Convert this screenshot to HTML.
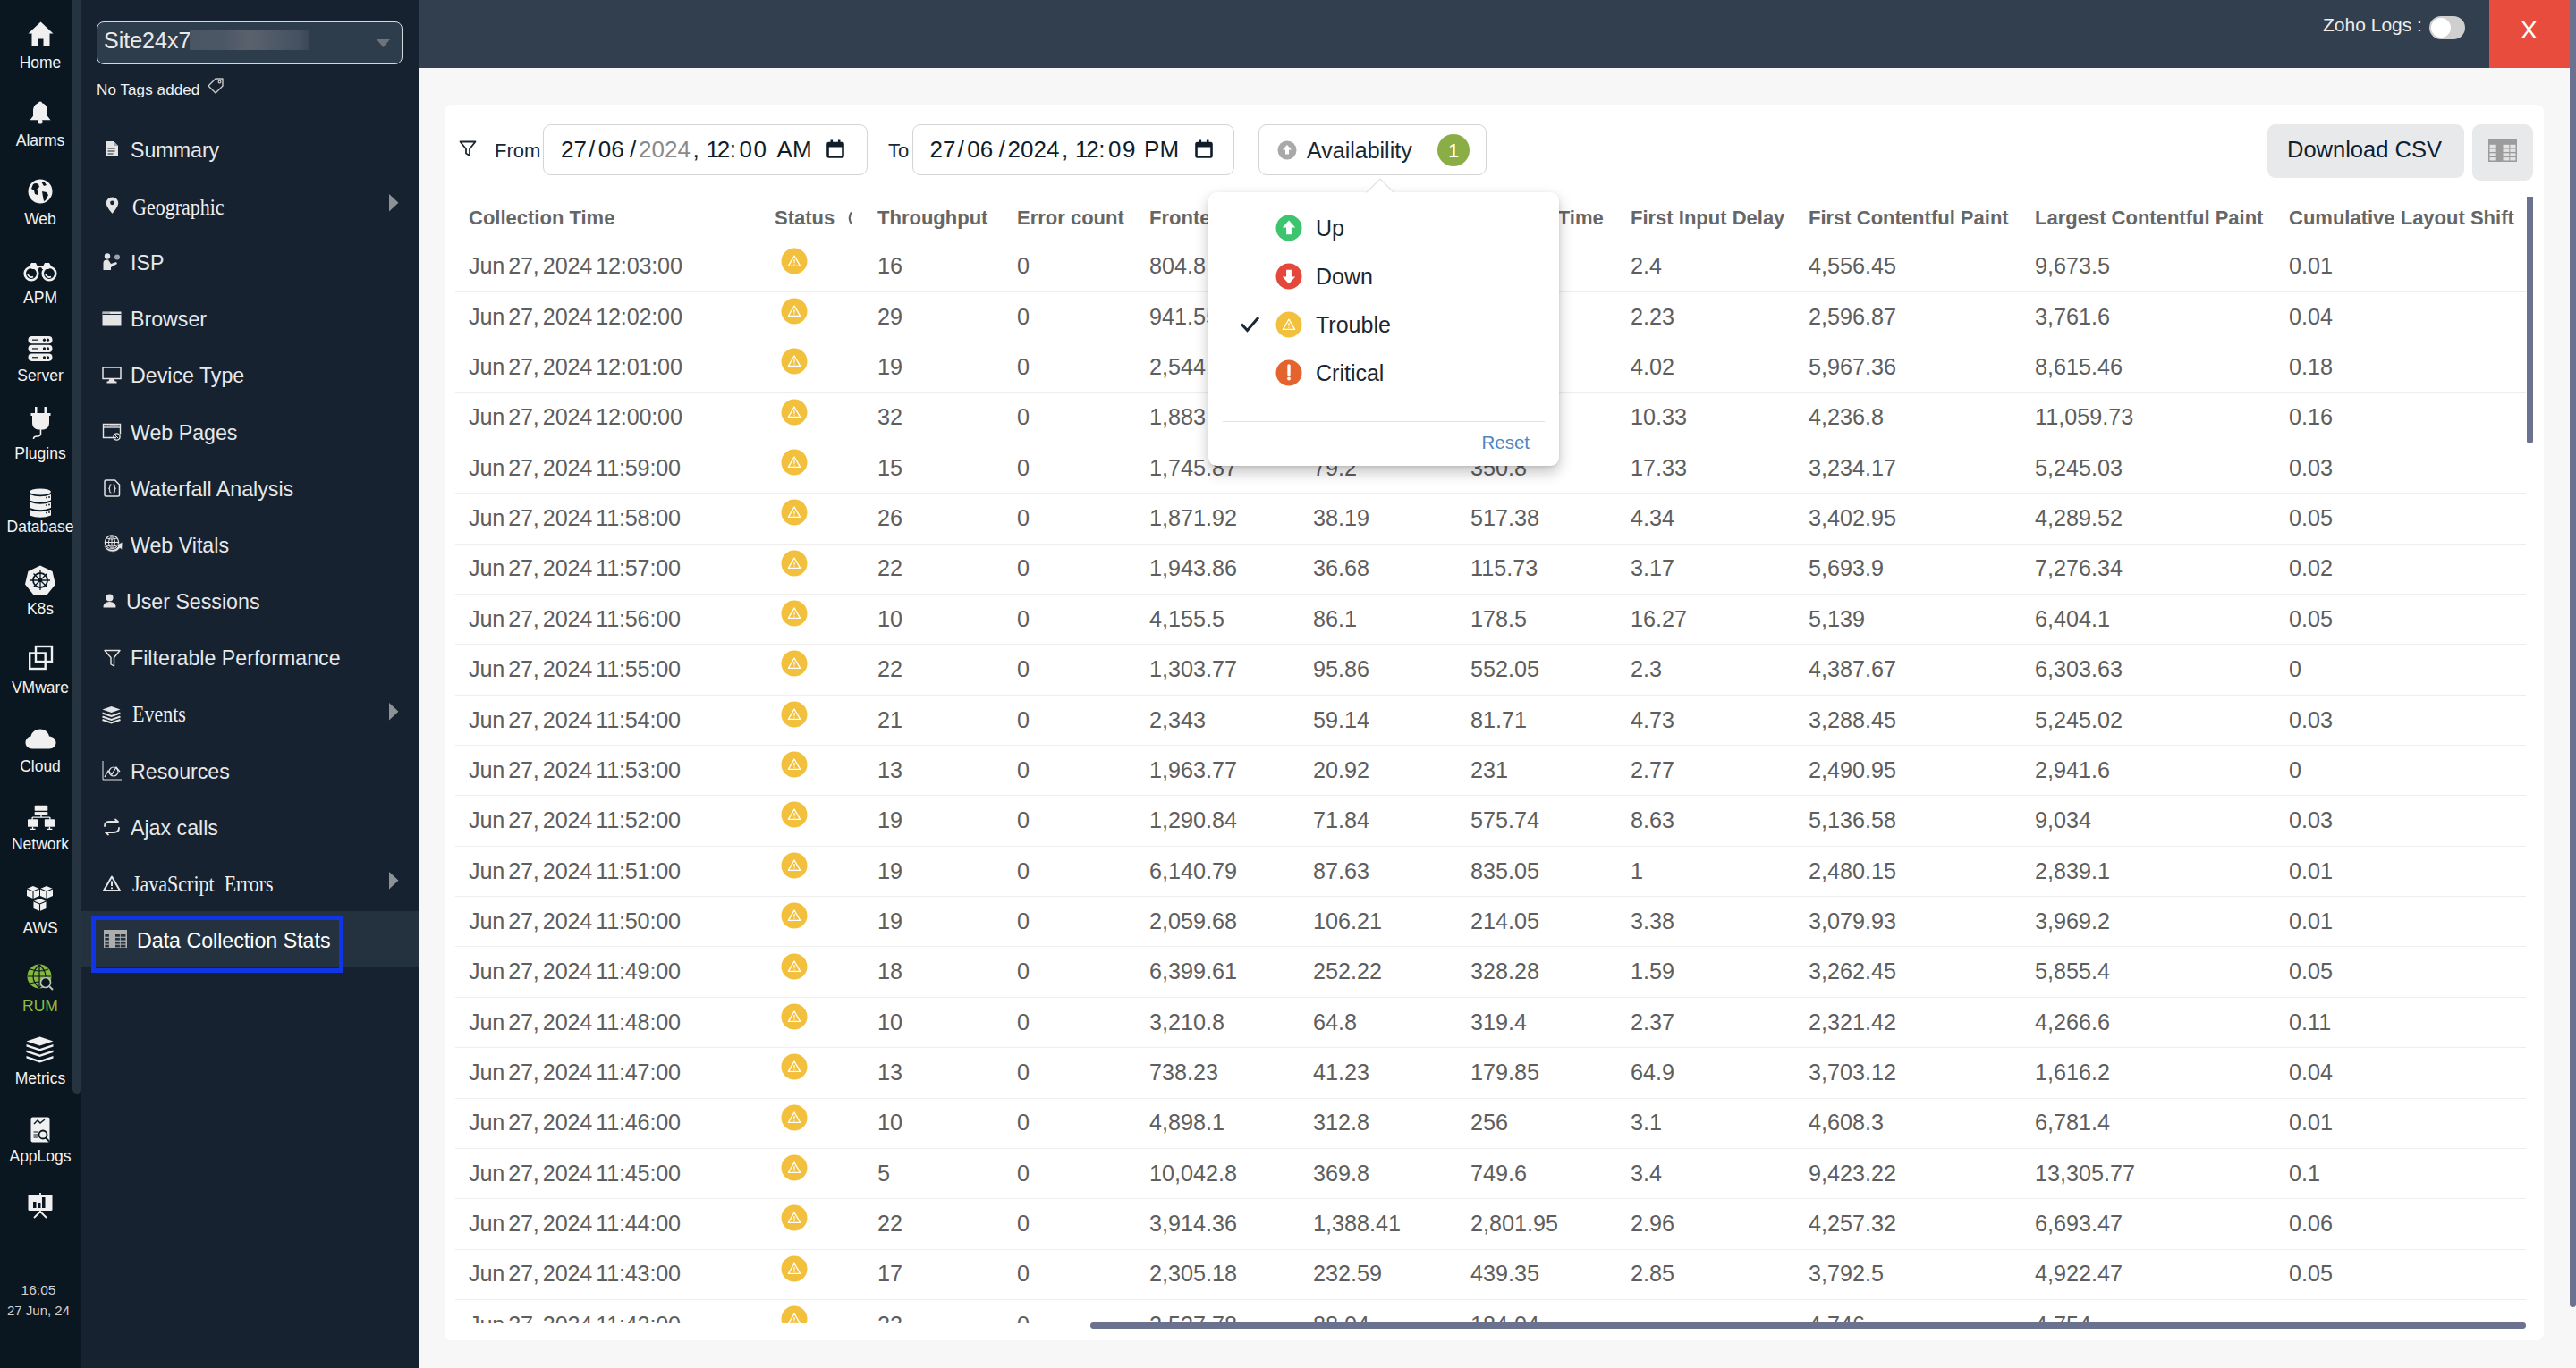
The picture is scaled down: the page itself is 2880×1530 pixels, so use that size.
<!DOCTYPE html>
<html><head><meta charset="utf-8"><title>Data Collection Stats</title>
<style>
html,body{margin:0;padding:0;}
body{width:2880px;height:1530px;position:relative;overflow:hidden;background:#f7f7f7;font-family:"Liberation Sans", sans-serif;}
.t{position:absolute;white-space:nowrap;line-height:1;}
.f1{font-family:"Liberation Sans", sans-serif;}
.f2{font-family:"Liberation Serif", serif;}
.b{position:absolute;}
svg.b{overflow:visible;}
</style></head><body>

<div class="b" style="left:0.00px;top:0.00px;width:81.00px;height:1530.00px;background:#0a1721"></div>
<div class="b" style="left:81.00px;top:0.00px;width:9.00px;height:1530.00px;background:#0a1721"></div>
<div class="b" style="left:81.00px;top:0.00px;width:9.00px;height:1223.00px;background:#263442;border-radius:0 0 4px 5px"></div>
<div class="b" style="left:90.00px;top:0.00px;width:378.00px;height:1530.00px;background:#16222f"></div>
<div class="b" style="left:468.00px;top:0.00px;width:2405.00px;height:76.00px;background:#323f4e"></div>
<div class="b" style="left:2783.00px;top:0.00px;width:90.50px;height:76.00px;background:#e84c3d"></div>
<div class="b" style="left:2873.00px;top:0.00px;width:7.00px;height:1530.00px;background:#f7f7f7"></div>
<div class="b" style="left:2873.30px;top:0.00px;width:6.70px;height:1462.00px;background:#6b7290;border-radius:0 0 4px 4px"></div>
<div class="t f1" style="left:2597.00px;top:17.02px;font-size:21px;color:#ececec;">Zoho Logs :</div>
<div class="b" style="left:2716.00px;top:18.00px;width:40.00px;height:26.00px;background:#cfcfcf;border-radius:13px"></div>
<div class="b" style="left:2718.00px;top:20.00px;width:22.00px;height:22.00px;background:#fff;border-radius:50%"></div>
<div class="t f1" style="left:2818.00px;top:20.30px;font-size:28px;color:#fff;">X</div>
<div class="b" style="left:497.00px;top:116.50px;width:2347.00px;height:1382.70px;background:#fff;border-radius:8px"></div>
<svg class="b" style="left:513.00px;top:157.00px;" width="20" height="19" viewBox="0 0 20 19"><path d="M1.5 1.5h17l-6.5 8v7.5l-4 -2.5v-5z" fill="none" stroke="#1b2733" stroke-width="1.8" stroke-linejoin="round"/></svg>
<div class="t f1" style="left:553.00px;top:157.88px;font-size:22px;color:#1b2733;">From</div>
<div class="b" style="left:607.00px;top:139.00px;width:363.00px;height:57.00px;border:1.5px solid #d4d4d4;border-radius:9px;box-sizing:border-box"></div>
<div class="t f1" style="left:627.00px;top:153.99px;font-size:26px;color:#0f1d2b;">27</div>
<div class="t f1" style="left:658.00px;top:153.99px;font-size:26px;color:#0f1d2b;">/</div>
<div class="t f1" style="left:668.80px;top:153.99px;font-size:26px;color:#0f1d2b;">06</div>
<div class="t f1" style="left:704.00px;top:153.99px;font-size:26px;color:#0f1d2b;">/</div>
<div class="t f1" style="left:714.00px;top:153.99px;font-size:26px;color:#8a8a8a;">2024</div>
<div class="t f1" style="left:774.40px;top:153.99px;font-size:26px;color:#0f1d2b;">,</div>
<div class="t f1" style="left:789.40px;top:153.99px;font-size:26px;color:#0f1d2b;letter-spacing:-2px;">12</div>
<div class="t f1" style="left:815.80px;top:153.99px;font-size:26px;color:#0f1d2b;">:</div>
<div class="t f1" style="left:826.50px;top:153.99px;font-size:26px;color:#0f1d2b;letter-spacing:1.5px;">00</div>
<div class="t f1" style="left:868.60px;top:153.99px;font-size:26px;color:#0f1d2b;">AM</div>
<svg class="b" style="left:924.00px;top:156.00px;" width="20" height="21" viewBox="0 0 20 21"><rect x="1.5" y="4" width="17" height="15.5" rx="1" fill="none" stroke="#0f1d2b" stroke-width="2.6"/><rect x="1.5" y="4" width="17" height="4.5" fill="#0f1d2b"/><rect x="4.5" y="0.5" width="2.6" height="4" fill="#0f1d2b"/><rect x="12.9" y="0.5" width="2.6" height="4" fill="#0f1d2b"/></svg>
<div class="t f1" style="left:993.00px;top:157.88px;font-size:22px;color:#1b2733;">To</div>
<div class="b" style="left:1020.00px;top:139.00px;width:360.00px;height:57.00px;border:1.5px solid #d4d4d4;border-radius:9px;box-sizing:border-box"></div>
<div class="t f1" style="left:1039.50px;top:153.99px;font-size:26px;color:#0f1d2b;">27</div>
<div class="t f1" style="left:1070.50px;top:153.99px;font-size:26px;color:#0f1d2b;">/</div>
<div class="t f1" style="left:1081.30px;top:153.99px;font-size:26px;color:#0f1d2b;">06</div>
<div class="t f1" style="left:1116.50px;top:153.99px;font-size:26px;color:#0f1d2b;">/</div>
<div class="t f1" style="left:1126.50px;top:153.99px;font-size:26px;color:#0f1d2b;">2024</div>
<div class="t f1" style="left:1186.90px;top:153.99px;font-size:26px;color:#0f1d2b;">,</div>
<div class="t f1" style="left:1201.90px;top:153.99px;font-size:26px;color:#0f1d2b;letter-spacing:-2px;">12</div>
<div class="t f1" style="left:1228.30px;top:153.99px;font-size:26px;color:#0f1d2b;">:</div>
<div class="t f1" style="left:1239.00px;top:153.99px;font-size:26px;color:#0f1d2b;letter-spacing:1.5px;">09</div>
<div class="t f1" style="left:1279.10px;top:153.99px;font-size:26px;color:#0f1d2b;">PM</div>
<svg class="b" style="left:1336.00px;top:156.00px;" width="20" height="21" viewBox="0 0 20 21"><rect x="1.5" y="4" width="17" height="15.5" rx="1" fill="none" stroke="#0f1d2b" stroke-width="2.6"/><rect x="1.5" y="4" width="17" height="4.5" fill="#0f1d2b"/><rect x="4.5" y="0.5" width="2.6" height="4" fill="#0f1d2b"/><rect x="12.9" y="0.5" width="2.6" height="4" fill="#0f1d2b"/></svg>
<div class="b" style="left:1407.00px;top:139.00px;width:255.00px;height:57.00px;border:1.5px solid #d4d4d4;border-radius:9px;box-sizing:border-box;background:#fff"></div>
<svg class="b" style="left:1428.00px;top:157.00px;" width="22" height="22" viewBox="0 0 22 22"><circle cx="11" cy="11" r="10.5" fill="#a9a9a9"/><path d="M11 5l-5 5.5h3v5h4v-5h3z" fill="#fff"/></svg>
<div class="t f1" style="left:1461.00px;top:156.34px;font-size:25px;color:#1b2733;">Availability</div>
<div class="b" style="left:1607.00px;top:150.00px;width:36.00px;height:36.00px;background:#8bad45;border-radius:50%"></div>
<div class="t f1" style="left:1619.00px;top:158.38px;font-size:22px;color:#fff;">1</div>
<div class="b" style="left:2535.00px;top:139.00px;width:220.00px;height:60.00px;background:#e8e9ea;border-radius:9px"></div>
<div class="t f1" style="left:2557.00px;top:155.41px;font-size:25.5px;color:#10202e;">Download CSV</div>
<div class="b" style="left:2764.00px;top:139.00px;width:68.00px;height:63.00px;background:#e8e9ea;border-radius:9px"></div>
<svg class="b" style="left:2782.00px;top:156.00px;" width="32" height="25" viewBox="0 0 32 25"><rect x="0" y="0" width="32" height="25" fill="#9c9c9c"/><rect x="1.5" y="5.80" width="6.2" height="3.4" fill="#e2e3e4"/><rect x="16.5" y="5.80" width="6.8" height="3.4" fill="#e2e3e4"/><rect x="24.3" y="5.80" width="6.2" height="3.4" fill="#e2e3e4"/><rect x="1.5" y="10.55" width="6.2" height="3.4" fill="#e2e3e4"/><rect x="16.5" y="10.55" width="6.8" height="3.4" fill="#e2e3e4"/><rect x="24.3" y="10.55" width="6.2" height="3.4" fill="#e2e3e4"/><rect x="1.5" y="15.30" width="6.2" height="3.4" fill="#e2e3e4"/><rect x="16.5" y="15.30" width="6.8" height="3.4" fill="#e2e3e4"/><rect x="24.3" y="15.30" width="6.2" height="3.4" fill="#e2e3e4"/><rect x="1.5" y="20.05" width="6.2" height="3.4" fill="#e2e3e4"/><rect x="16.5" y="20.05" width="6.8" height="3.4" fill="#e2e3e4"/><rect x="24.3" y="20.05" width="6.2" height="3.4" fill="#e2e3e4"/></svg>
<div class="t f1" style="left:524.00px;top:232.88px;font-size:22px;color:#666666;font-weight:700;">Collection Time</div>
<div class="t f1" style="left:866.00px;top:232.88px;font-size:22px;color:#666666;font-weight:700;">Status</div>
<div class="t f1" style="left:981.00px;top:232.88px;font-size:22px;color:#666666;font-weight:700;">Throughput</div>
<div class="t f1" style="left:1137.00px;top:232.88px;font-size:22px;color:#666666;font-weight:700;">Error count</div>
<div class="t f1" style="left:1285.00px;top:232.88px;font-size:22px;color:#666666;font-weight:700;">Frontend Time</div>
<div class="t f1" style="left:1468.00px;top:232.88px;font-size:22px;color:#666666;font-weight:700;">Network Time</div>
<div class="t f1" style="left:1644.00px;top:232.88px;font-size:22px;color:#666666;font-weight:700;">Backend Time</div>
<div class="t f1" style="left:1823.00px;top:232.88px;font-size:22px;color:#666666;font-weight:700;">First Input Delay</div>
<div class="t f1" style="left:2022.00px;top:232.88px;font-size:22px;color:#666666;font-weight:700;">First Contentful Paint</div>
<div class="t f1" style="left:2275.00px;top:232.88px;font-size:22px;color:#666666;font-weight:700;">Largest Contentful Paint</div>
<div class="t f1" style="left:2559.00px;top:232.88px;font-size:22px;color:#666666;font-weight:700;">Cumulative Layout Shift</div>
<svg class="b" style="left:946.00px;top:236.00px;" width="7" height="16" viewBox="0 0 7 16"><path d="M6 1.5q-4.5 6.5 0 13" fill="none" stroke="#666" stroke-width="2.2"/></svg>
<div class="b" style="left:497px;top:200px;width:2346px;height:1279.5px;overflow:hidden">
<div class="b" style="left:12px;top:69.40px;width:2315px;height:1px;background:#eeeeee"></div>
<div class="b" style="left:12px;top:125.76px;width:2315px;height:1px;background:#eeeeee"></div>
<div class="b" style="left:12px;top:182.12px;width:2315px;height:1px;background:#eeeeee"></div>
<div class="b" style="left:12px;top:238.48px;width:2315px;height:1px;background:#eeeeee"></div>
<div class="b" style="left:12px;top:294.84px;width:2315px;height:1px;background:#eeeeee"></div>
<div class="b" style="left:12px;top:351.20px;width:2315px;height:1px;background:#eeeeee"></div>
<div class="b" style="left:12px;top:407.56px;width:2315px;height:1px;background:#eeeeee"></div>
<div class="b" style="left:12px;top:463.92px;width:2315px;height:1px;background:#eeeeee"></div>
<div class="b" style="left:12px;top:520.28px;width:2315px;height:1px;background:#eeeeee"></div>
<div class="b" style="left:12px;top:576.64px;width:2315px;height:1px;background:#eeeeee"></div>
<div class="b" style="left:12px;top:633.00px;width:2315px;height:1px;background:#eeeeee"></div>
<div class="b" style="left:12px;top:689.36px;width:2315px;height:1px;background:#eeeeee"></div>
<div class="b" style="left:12px;top:745.72px;width:2315px;height:1px;background:#eeeeee"></div>
<div class="b" style="left:12px;top:802.08px;width:2315px;height:1px;background:#eeeeee"></div>
<div class="b" style="left:12px;top:858.44px;width:2315px;height:1px;background:#eeeeee"></div>
<div class="b" style="left:12px;top:914.80px;width:2315px;height:1px;background:#eeeeee"></div>
<div class="b" style="left:12px;top:971.16px;width:2315px;height:1px;background:#eeeeee"></div>
<div class="b" style="left:12px;top:1027.52px;width:2315px;height:1px;background:#eeeeee"></div>
<div class="b" style="left:12px;top:1083.88px;width:2315px;height:1px;background:#eeeeee"></div>
<div class="b" style="left:12px;top:1140.24px;width:2315px;height:1px;background:#eeeeee"></div>
<div class="b" style="left:12px;top:1196.60px;width:2315px;height:1px;background:#eeeeee"></div>
<div class="b" style="left:12px;top:1252.96px;width:2315px;height:1px;background:#eeeeee"></div>
<div class="b" style="left:12px;top:1309.32px;width:2315px;height:1px;background:#eeeeee"></div>
<div class="t f1" style="left:27.00px;top:85.27px;font-size:25.2px;color:#5e5e5e;word-spacing:-2.6px;letter-spacing:-0.2px;">Jun 27, 2024 12:03:00</div>
<svg class="b" style="left:376px;top:76.50px" width="30" height="30" viewBox="0 0 30 30"><circle cx="15" cy="15" r="14.5" fill="#f2c03c"/><path d="M15 9l-6.6 11.4h13.2z" fill="none" stroke="#fff" stroke-width="1.35" stroke-linejoin="round"/><path d="M15 13v3.8M15 17.8v1" stroke="#fff" stroke-width="1.2"/></svg>
<div class="t f1" style="left:484.00px;top:85.27px;font-size:25.2px;color:#5e5e5e;">16</div>
<div class="t f1" style="left:640.00px;top:85.27px;font-size:25.2px;color:#5e5e5e;">0</div>
<div class="t f1" style="left:788.00px;top:85.27px;font-size:25.2px;color:#5e5e5e;">804.8</div>
<div class="t f1" style="left:971.00px;top:85.27px;font-size:25.2px;color:#5e5e5e;">50.31</div>
<div class="t f1" style="left:1147.00px;top:85.27px;font-size:25.2px;color:#5e5e5e;">263.15</div>
<div class="t f1" style="left:1326.00px;top:85.27px;font-size:25.2px;color:#5e5e5e;">2.4</div>
<div class="t f1" style="left:1525.00px;top:85.27px;font-size:25.2px;color:#5e5e5e;">4,556.45</div>
<div class="t f1" style="left:1778.00px;top:85.27px;font-size:25.2px;color:#5e5e5e;">9,673.5</div>
<div class="t f1" style="left:2062.00px;top:85.27px;font-size:25.2px;color:#5e5e5e;">0.01</div>
<div class="t f1" style="left:27.00px;top:141.63px;font-size:25.2px;color:#5e5e5e;word-spacing:-2.6px;letter-spacing:-0.2px;">Jun 27, 2024 12:02:00</div>
<svg class="b" style="left:376px;top:132.86px" width="30" height="30" viewBox="0 0 30 30"><circle cx="15" cy="15" r="14.5" fill="#f2c03c"/><path d="M15 9l-6.6 11.4h13.2z" fill="none" stroke="#fff" stroke-width="1.35" stroke-linejoin="round"/><path d="M15 13v3.8M15 17.8v1" stroke="#fff" stroke-width="1.2"/></svg>
<div class="t f1" style="left:484.00px;top:141.63px;font-size:25.2px;color:#5e5e5e;">29</div>
<div class="t f1" style="left:640.00px;top:141.63px;font-size:25.2px;color:#5e5e5e;">0</div>
<div class="t f1" style="left:788.00px;top:141.63px;font-size:25.2px;color:#5e5e5e;">941.55</div>
<div class="t f1" style="left:971.00px;top:141.63px;font-size:25.2px;color:#5e5e5e;">38.91</div>
<div class="t f1" style="left:1147.00px;top:141.63px;font-size:25.2px;color:#5e5e5e;">160.34</div>
<div class="t f1" style="left:1326.00px;top:141.63px;font-size:25.2px;color:#5e5e5e;">2.23</div>
<div class="t f1" style="left:1525.00px;top:141.63px;font-size:25.2px;color:#5e5e5e;">2,596.87</div>
<div class="t f1" style="left:1778.00px;top:141.63px;font-size:25.2px;color:#5e5e5e;">3,761.6</div>
<div class="t f1" style="left:2062.00px;top:141.63px;font-size:25.2px;color:#5e5e5e;">0.04</div>
<div class="t f1" style="left:27.00px;top:197.99px;font-size:25.2px;color:#5e5e5e;word-spacing:-2.6px;letter-spacing:-0.2px;">Jun 27, 2024 12:01:00</div>
<svg class="b" style="left:376px;top:189.22px" width="30" height="30" viewBox="0 0 30 30"><circle cx="15" cy="15" r="14.5" fill="#f2c03c"/><path d="M15 9l-6.6 11.4h13.2z" fill="none" stroke="#fff" stroke-width="1.35" stroke-linejoin="round"/><path d="M15 13v3.8M15 17.8v1" stroke="#fff" stroke-width="1.2"/></svg>
<div class="t f1" style="left:484.00px;top:197.99px;font-size:25.2px;color:#5e5e5e;">19</div>
<div class="t f1" style="left:640.00px;top:197.99px;font-size:25.2px;color:#5e5e5e;">0</div>
<div class="t f1" style="left:788.00px;top:197.99px;font-size:25.2px;color:#5e5e5e;">2,544.71</div>
<div class="t f1" style="left:971.00px;top:197.99px;font-size:25.2px;color:#5e5e5e;">41.68</div>
<div class="t f1" style="left:1147.00px;top:197.99px;font-size:25.2px;color:#5e5e5e;">390.42</div>
<div class="t f1" style="left:1326.00px;top:197.99px;font-size:25.2px;color:#5e5e5e;">4.02</div>
<div class="t f1" style="left:1525.00px;top:197.99px;font-size:25.2px;color:#5e5e5e;">5,967.36</div>
<div class="t f1" style="left:1778.00px;top:197.99px;font-size:25.2px;color:#5e5e5e;">8,615.46</div>
<div class="t f1" style="left:2062.00px;top:197.99px;font-size:25.2px;color:#5e5e5e;">0.18</div>
<div class="t f1" style="left:27.00px;top:254.35px;font-size:25.2px;color:#5e5e5e;word-spacing:-2.6px;letter-spacing:-0.2px;">Jun 27, 2024 12:00:00</div>
<svg class="b" style="left:376px;top:245.58px" width="30" height="30" viewBox="0 0 30 30"><circle cx="15" cy="15" r="14.5" fill="#f2c03c"/><path d="M15 9l-6.6 11.4h13.2z" fill="none" stroke="#fff" stroke-width="1.35" stroke-linejoin="round"/><path d="M15 13v3.8M15 17.8v1" stroke="#fff" stroke-width="1.2"/></svg>
<div class="t f1" style="left:484.00px;top:254.35px;font-size:25.2px;color:#5e5e5e;">32</div>
<div class="t f1" style="left:640.00px;top:254.35px;font-size:25.2px;color:#5e5e5e;">0</div>
<div class="t f1" style="left:788.00px;top:254.35px;font-size:25.2px;color:#5e5e5e;">1,883.91</div>
<div class="t f1" style="left:971.00px;top:254.35px;font-size:25.2px;color:#5e5e5e;">45.5</div>
<div class="t f1" style="left:1147.00px;top:254.35px;font-size:25.2px;color:#5e5e5e;">308.81</div>
<div class="t f1" style="left:1326.00px;top:254.35px;font-size:25.2px;color:#5e5e5e;">10.33</div>
<div class="t f1" style="left:1525.00px;top:254.35px;font-size:25.2px;color:#5e5e5e;">4,236.8</div>
<div class="t f1" style="left:1778.00px;top:254.35px;font-size:25.2px;color:#5e5e5e;">11,059.73</div>
<div class="t f1" style="left:2062.00px;top:254.35px;font-size:25.2px;color:#5e5e5e;">0.16</div>
<div class="t f1" style="left:27.00px;top:310.71px;font-size:25.2px;color:#5e5e5e;word-spacing:-2.6px;letter-spacing:-0.2px;">Jun 27, 2024 11:59:00</div>
<svg class="b" style="left:376px;top:301.94px" width="30" height="30" viewBox="0 0 30 30"><circle cx="15" cy="15" r="14.5" fill="#f2c03c"/><path d="M15 9l-6.6 11.4h13.2z" fill="none" stroke="#fff" stroke-width="1.35" stroke-linejoin="round"/><path d="M15 13v3.8M15 17.8v1" stroke="#fff" stroke-width="1.2"/></svg>
<div class="t f1" style="left:484.00px;top:310.71px;font-size:25.2px;color:#5e5e5e;">15</div>
<div class="t f1" style="left:640.00px;top:310.71px;font-size:25.2px;color:#5e5e5e;">0</div>
<div class="t f1" style="left:788.00px;top:310.71px;font-size:25.2px;color:#5e5e5e;">1,745.87</div>
<div class="t f1" style="left:971.00px;top:310.71px;font-size:25.2px;color:#5e5e5e;">79.2</div>
<div class="t f1" style="left:1147.00px;top:310.71px;font-size:25.2px;color:#5e5e5e;">350.8</div>
<div class="t f1" style="left:1326.00px;top:310.71px;font-size:25.2px;color:#5e5e5e;">17.33</div>
<div class="t f1" style="left:1525.00px;top:310.71px;font-size:25.2px;color:#5e5e5e;">3,234.17</div>
<div class="t f1" style="left:1778.00px;top:310.71px;font-size:25.2px;color:#5e5e5e;">5,245.03</div>
<div class="t f1" style="left:2062.00px;top:310.71px;font-size:25.2px;color:#5e5e5e;">0.03</div>
<div class="t f1" style="left:27.00px;top:367.07px;font-size:25.2px;color:#5e5e5e;word-spacing:-2.6px;letter-spacing:-0.2px;">Jun 27, 2024 11:58:00</div>
<svg class="b" style="left:376px;top:358.30px" width="30" height="30" viewBox="0 0 30 30"><circle cx="15" cy="15" r="14.5" fill="#f2c03c"/><path d="M15 9l-6.6 11.4h13.2z" fill="none" stroke="#fff" stroke-width="1.35" stroke-linejoin="round"/><path d="M15 13v3.8M15 17.8v1" stroke="#fff" stroke-width="1.2"/></svg>
<div class="t f1" style="left:484.00px;top:367.07px;font-size:25.2px;color:#5e5e5e;">26</div>
<div class="t f1" style="left:640.00px;top:367.07px;font-size:25.2px;color:#5e5e5e;">0</div>
<div class="t f1" style="left:788.00px;top:367.07px;font-size:25.2px;color:#5e5e5e;">1,871.92</div>
<div class="t f1" style="left:971.00px;top:367.07px;font-size:25.2px;color:#5e5e5e;">38.19</div>
<div class="t f1" style="left:1147.00px;top:367.07px;font-size:25.2px;color:#5e5e5e;">517.38</div>
<div class="t f1" style="left:1326.00px;top:367.07px;font-size:25.2px;color:#5e5e5e;">4.34</div>
<div class="t f1" style="left:1525.00px;top:367.07px;font-size:25.2px;color:#5e5e5e;">3,402.95</div>
<div class="t f1" style="left:1778.00px;top:367.07px;font-size:25.2px;color:#5e5e5e;">4,289.52</div>
<div class="t f1" style="left:2062.00px;top:367.07px;font-size:25.2px;color:#5e5e5e;">0.05</div>
<div class="t f1" style="left:27.00px;top:423.43px;font-size:25.2px;color:#5e5e5e;word-spacing:-2.6px;letter-spacing:-0.2px;">Jun 27, 2024 11:57:00</div>
<svg class="b" style="left:376px;top:414.66px" width="30" height="30" viewBox="0 0 30 30"><circle cx="15" cy="15" r="14.5" fill="#f2c03c"/><path d="M15 9l-6.6 11.4h13.2z" fill="none" stroke="#fff" stroke-width="1.35" stroke-linejoin="round"/><path d="M15 13v3.8M15 17.8v1" stroke="#fff" stroke-width="1.2"/></svg>
<div class="t f1" style="left:484.00px;top:423.43px;font-size:25.2px;color:#5e5e5e;">22</div>
<div class="t f1" style="left:640.00px;top:423.43px;font-size:25.2px;color:#5e5e5e;">0</div>
<div class="t f1" style="left:788.00px;top:423.43px;font-size:25.2px;color:#5e5e5e;">1,943.86</div>
<div class="t f1" style="left:971.00px;top:423.43px;font-size:25.2px;color:#5e5e5e;">36.68</div>
<div class="t f1" style="left:1147.00px;top:423.43px;font-size:25.2px;color:#5e5e5e;">115.73</div>
<div class="t f1" style="left:1326.00px;top:423.43px;font-size:25.2px;color:#5e5e5e;">3.17</div>
<div class="t f1" style="left:1525.00px;top:423.43px;font-size:25.2px;color:#5e5e5e;">5,693.9</div>
<div class="t f1" style="left:1778.00px;top:423.43px;font-size:25.2px;color:#5e5e5e;">7,276.34</div>
<div class="t f1" style="left:2062.00px;top:423.43px;font-size:25.2px;color:#5e5e5e;">0.02</div>
<div class="t f1" style="left:27.00px;top:479.79px;font-size:25.2px;color:#5e5e5e;word-spacing:-2.6px;letter-spacing:-0.2px;">Jun 27, 2024 11:56:00</div>
<svg class="b" style="left:376px;top:471.02px" width="30" height="30" viewBox="0 0 30 30"><circle cx="15" cy="15" r="14.5" fill="#f2c03c"/><path d="M15 9l-6.6 11.4h13.2z" fill="none" stroke="#fff" stroke-width="1.35" stroke-linejoin="round"/><path d="M15 13v3.8M15 17.8v1" stroke="#fff" stroke-width="1.2"/></svg>
<div class="t f1" style="left:484.00px;top:479.79px;font-size:25.2px;color:#5e5e5e;">10</div>
<div class="t f1" style="left:640.00px;top:479.79px;font-size:25.2px;color:#5e5e5e;">0</div>
<div class="t f1" style="left:788.00px;top:479.79px;font-size:25.2px;color:#5e5e5e;">4,155.5</div>
<div class="t f1" style="left:971.00px;top:479.79px;font-size:25.2px;color:#5e5e5e;">86.1</div>
<div class="t f1" style="left:1147.00px;top:479.79px;font-size:25.2px;color:#5e5e5e;">178.5</div>
<div class="t f1" style="left:1326.00px;top:479.79px;font-size:25.2px;color:#5e5e5e;">16.27</div>
<div class="t f1" style="left:1525.00px;top:479.79px;font-size:25.2px;color:#5e5e5e;">5,139</div>
<div class="t f1" style="left:1778.00px;top:479.79px;font-size:25.2px;color:#5e5e5e;">6,404.1</div>
<div class="t f1" style="left:2062.00px;top:479.79px;font-size:25.2px;color:#5e5e5e;">0.05</div>
<div class="t f1" style="left:27.00px;top:536.15px;font-size:25.2px;color:#5e5e5e;word-spacing:-2.6px;letter-spacing:-0.2px;">Jun 27, 2024 11:55:00</div>
<svg class="b" style="left:376px;top:527.38px" width="30" height="30" viewBox="0 0 30 30"><circle cx="15" cy="15" r="14.5" fill="#f2c03c"/><path d="M15 9l-6.6 11.4h13.2z" fill="none" stroke="#fff" stroke-width="1.35" stroke-linejoin="round"/><path d="M15 13v3.8M15 17.8v1" stroke="#fff" stroke-width="1.2"/></svg>
<div class="t f1" style="left:484.00px;top:536.15px;font-size:25.2px;color:#5e5e5e;">22</div>
<div class="t f1" style="left:640.00px;top:536.15px;font-size:25.2px;color:#5e5e5e;">0</div>
<div class="t f1" style="left:788.00px;top:536.15px;font-size:25.2px;color:#5e5e5e;">1,303.77</div>
<div class="t f1" style="left:971.00px;top:536.15px;font-size:25.2px;color:#5e5e5e;">95.86</div>
<div class="t f1" style="left:1147.00px;top:536.15px;font-size:25.2px;color:#5e5e5e;">552.05</div>
<div class="t f1" style="left:1326.00px;top:536.15px;font-size:25.2px;color:#5e5e5e;">2.3</div>
<div class="t f1" style="left:1525.00px;top:536.15px;font-size:25.2px;color:#5e5e5e;">4,387.67</div>
<div class="t f1" style="left:1778.00px;top:536.15px;font-size:25.2px;color:#5e5e5e;">6,303.63</div>
<div class="t f1" style="left:2062.00px;top:536.15px;font-size:25.2px;color:#5e5e5e;">0</div>
<div class="t f1" style="left:27.00px;top:592.51px;font-size:25.2px;color:#5e5e5e;word-spacing:-2.6px;letter-spacing:-0.2px;">Jun 27, 2024 11:54:00</div>
<svg class="b" style="left:376px;top:583.74px" width="30" height="30" viewBox="0 0 30 30"><circle cx="15" cy="15" r="14.5" fill="#f2c03c"/><path d="M15 9l-6.6 11.4h13.2z" fill="none" stroke="#fff" stroke-width="1.35" stroke-linejoin="round"/><path d="M15 13v3.8M15 17.8v1" stroke="#fff" stroke-width="1.2"/></svg>
<div class="t f1" style="left:484.00px;top:592.51px;font-size:25.2px;color:#5e5e5e;">21</div>
<div class="t f1" style="left:640.00px;top:592.51px;font-size:25.2px;color:#5e5e5e;">0</div>
<div class="t f1" style="left:788.00px;top:592.51px;font-size:25.2px;color:#5e5e5e;">2,343</div>
<div class="t f1" style="left:971.00px;top:592.51px;font-size:25.2px;color:#5e5e5e;">59.14</div>
<div class="t f1" style="left:1147.00px;top:592.51px;font-size:25.2px;color:#5e5e5e;">81.71</div>
<div class="t f1" style="left:1326.00px;top:592.51px;font-size:25.2px;color:#5e5e5e;">4.73</div>
<div class="t f1" style="left:1525.00px;top:592.51px;font-size:25.2px;color:#5e5e5e;">3,288.45</div>
<div class="t f1" style="left:1778.00px;top:592.51px;font-size:25.2px;color:#5e5e5e;">5,245.02</div>
<div class="t f1" style="left:2062.00px;top:592.51px;font-size:25.2px;color:#5e5e5e;">0.03</div>
<div class="t f1" style="left:27.00px;top:648.87px;font-size:25.2px;color:#5e5e5e;word-spacing:-2.6px;letter-spacing:-0.2px;">Jun 27, 2024 11:53:00</div>
<svg class="b" style="left:376px;top:640.10px" width="30" height="30" viewBox="0 0 30 30"><circle cx="15" cy="15" r="14.5" fill="#f2c03c"/><path d="M15 9l-6.6 11.4h13.2z" fill="none" stroke="#fff" stroke-width="1.35" stroke-linejoin="round"/><path d="M15 13v3.8M15 17.8v1" stroke="#fff" stroke-width="1.2"/></svg>
<div class="t f1" style="left:484.00px;top:648.87px;font-size:25.2px;color:#5e5e5e;">13</div>
<div class="t f1" style="left:640.00px;top:648.87px;font-size:25.2px;color:#5e5e5e;">0</div>
<div class="t f1" style="left:788.00px;top:648.87px;font-size:25.2px;color:#5e5e5e;">1,963.77</div>
<div class="t f1" style="left:971.00px;top:648.87px;font-size:25.2px;color:#5e5e5e;">20.92</div>
<div class="t f1" style="left:1147.00px;top:648.87px;font-size:25.2px;color:#5e5e5e;">231</div>
<div class="t f1" style="left:1326.00px;top:648.87px;font-size:25.2px;color:#5e5e5e;">2.77</div>
<div class="t f1" style="left:1525.00px;top:648.87px;font-size:25.2px;color:#5e5e5e;">2,490.95</div>
<div class="t f1" style="left:1778.00px;top:648.87px;font-size:25.2px;color:#5e5e5e;">2,941.6</div>
<div class="t f1" style="left:2062.00px;top:648.87px;font-size:25.2px;color:#5e5e5e;">0</div>
<div class="t f1" style="left:27.00px;top:705.23px;font-size:25.2px;color:#5e5e5e;word-spacing:-2.6px;letter-spacing:-0.2px;">Jun 27, 2024 11:52:00</div>
<svg class="b" style="left:376px;top:696.46px" width="30" height="30" viewBox="0 0 30 30"><circle cx="15" cy="15" r="14.5" fill="#f2c03c"/><path d="M15 9l-6.6 11.4h13.2z" fill="none" stroke="#fff" stroke-width="1.35" stroke-linejoin="round"/><path d="M15 13v3.8M15 17.8v1" stroke="#fff" stroke-width="1.2"/></svg>
<div class="t f1" style="left:484.00px;top:705.23px;font-size:25.2px;color:#5e5e5e;">19</div>
<div class="t f1" style="left:640.00px;top:705.23px;font-size:25.2px;color:#5e5e5e;">0</div>
<div class="t f1" style="left:788.00px;top:705.23px;font-size:25.2px;color:#5e5e5e;">1,290.84</div>
<div class="t f1" style="left:971.00px;top:705.23px;font-size:25.2px;color:#5e5e5e;">71.84</div>
<div class="t f1" style="left:1147.00px;top:705.23px;font-size:25.2px;color:#5e5e5e;">575.74</div>
<div class="t f1" style="left:1326.00px;top:705.23px;font-size:25.2px;color:#5e5e5e;">8.63</div>
<div class="t f1" style="left:1525.00px;top:705.23px;font-size:25.2px;color:#5e5e5e;">5,136.58</div>
<div class="t f1" style="left:1778.00px;top:705.23px;font-size:25.2px;color:#5e5e5e;">9,034</div>
<div class="t f1" style="left:2062.00px;top:705.23px;font-size:25.2px;color:#5e5e5e;">0.03</div>
<div class="t f1" style="left:27.00px;top:761.59px;font-size:25.2px;color:#5e5e5e;word-spacing:-2.6px;letter-spacing:-0.2px;">Jun 27, 2024 11:51:00</div>
<svg class="b" style="left:376px;top:752.82px" width="30" height="30" viewBox="0 0 30 30"><circle cx="15" cy="15" r="14.5" fill="#f2c03c"/><path d="M15 9l-6.6 11.4h13.2z" fill="none" stroke="#fff" stroke-width="1.35" stroke-linejoin="round"/><path d="M15 13v3.8M15 17.8v1" stroke="#fff" stroke-width="1.2"/></svg>
<div class="t f1" style="left:484.00px;top:761.59px;font-size:25.2px;color:#5e5e5e;">19</div>
<div class="t f1" style="left:640.00px;top:761.59px;font-size:25.2px;color:#5e5e5e;">0</div>
<div class="t f1" style="left:788.00px;top:761.59px;font-size:25.2px;color:#5e5e5e;">6,140.79</div>
<div class="t f1" style="left:971.00px;top:761.59px;font-size:25.2px;color:#5e5e5e;">87.63</div>
<div class="t f1" style="left:1147.00px;top:761.59px;font-size:25.2px;color:#5e5e5e;">835.05</div>
<div class="t f1" style="left:1326.00px;top:761.59px;font-size:25.2px;color:#5e5e5e;">1</div>
<div class="t f1" style="left:1525.00px;top:761.59px;font-size:25.2px;color:#5e5e5e;">2,480.15</div>
<div class="t f1" style="left:1778.00px;top:761.59px;font-size:25.2px;color:#5e5e5e;">2,839.1</div>
<div class="t f1" style="left:2062.00px;top:761.59px;font-size:25.2px;color:#5e5e5e;">0.01</div>
<div class="t f1" style="left:27.00px;top:817.95px;font-size:25.2px;color:#5e5e5e;word-spacing:-2.6px;letter-spacing:-0.2px;">Jun 27, 2024 11:50:00</div>
<svg class="b" style="left:376px;top:809.18px" width="30" height="30" viewBox="0 0 30 30"><circle cx="15" cy="15" r="14.5" fill="#f2c03c"/><path d="M15 9l-6.6 11.4h13.2z" fill="none" stroke="#fff" stroke-width="1.35" stroke-linejoin="round"/><path d="M15 13v3.8M15 17.8v1" stroke="#fff" stroke-width="1.2"/></svg>
<div class="t f1" style="left:484.00px;top:817.95px;font-size:25.2px;color:#5e5e5e;">19</div>
<div class="t f1" style="left:640.00px;top:817.95px;font-size:25.2px;color:#5e5e5e;">0</div>
<div class="t f1" style="left:788.00px;top:817.95px;font-size:25.2px;color:#5e5e5e;">2,059.68</div>
<div class="t f1" style="left:971.00px;top:817.95px;font-size:25.2px;color:#5e5e5e;">106.21</div>
<div class="t f1" style="left:1147.00px;top:817.95px;font-size:25.2px;color:#5e5e5e;">214.05</div>
<div class="t f1" style="left:1326.00px;top:817.95px;font-size:25.2px;color:#5e5e5e;">3.38</div>
<div class="t f1" style="left:1525.00px;top:817.95px;font-size:25.2px;color:#5e5e5e;">3,079.93</div>
<div class="t f1" style="left:1778.00px;top:817.95px;font-size:25.2px;color:#5e5e5e;">3,969.2</div>
<div class="t f1" style="left:2062.00px;top:817.95px;font-size:25.2px;color:#5e5e5e;">0.01</div>
<div class="t f1" style="left:27.00px;top:874.31px;font-size:25.2px;color:#5e5e5e;word-spacing:-2.6px;letter-spacing:-0.2px;">Jun 27, 2024 11:49:00</div>
<svg class="b" style="left:376px;top:865.54px" width="30" height="30" viewBox="0 0 30 30"><circle cx="15" cy="15" r="14.5" fill="#f2c03c"/><path d="M15 9l-6.6 11.4h13.2z" fill="none" stroke="#fff" stroke-width="1.35" stroke-linejoin="round"/><path d="M15 13v3.8M15 17.8v1" stroke="#fff" stroke-width="1.2"/></svg>
<div class="t f1" style="left:484.00px;top:874.31px;font-size:25.2px;color:#5e5e5e;">18</div>
<div class="t f1" style="left:640.00px;top:874.31px;font-size:25.2px;color:#5e5e5e;">0</div>
<div class="t f1" style="left:788.00px;top:874.31px;font-size:25.2px;color:#5e5e5e;">6,399.61</div>
<div class="t f1" style="left:971.00px;top:874.31px;font-size:25.2px;color:#5e5e5e;">252.22</div>
<div class="t f1" style="left:1147.00px;top:874.31px;font-size:25.2px;color:#5e5e5e;">328.28</div>
<div class="t f1" style="left:1326.00px;top:874.31px;font-size:25.2px;color:#5e5e5e;">1.59</div>
<div class="t f1" style="left:1525.00px;top:874.31px;font-size:25.2px;color:#5e5e5e;">3,262.45</div>
<div class="t f1" style="left:1778.00px;top:874.31px;font-size:25.2px;color:#5e5e5e;">5,855.4</div>
<div class="t f1" style="left:2062.00px;top:874.31px;font-size:25.2px;color:#5e5e5e;">0.05</div>
<div class="t f1" style="left:27.00px;top:930.67px;font-size:25.2px;color:#5e5e5e;word-spacing:-2.6px;letter-spacing:-0.2px;">Jun 27, 2024 11:48:00</div>
<svg class="b" style="left:376px;top:921.90px" width="30" height="30" viewBox="0 0 30 30"><circle cx="15" cy="15" r="14.5" fill="#f2c03c"/><path d="M15 9l-6.6 11.4h13.2z" fill="none" stroke="#fff" stroke-width="1.35" stroke-linejoin="round"/><path d="M15 13v3.8M15 17.8v1" stroke="#fff" stroke-width="1.2"/></svg>
<div class="t f1" style="left:484.00px;top:930.67px;font-size:25.2px;color:#5e5e5e;">10</div>
<div class="t f1" style="left:640.00px;top:930.67px;font-size:25.2px;color:#5e5e5e;">0</div>
<div class="t f1" style="left:788.00px;top:930.67px;font-size:25.2px;color:#5e5e5e;">3,210.8</div>
<div class="t f1" style="left:971.00px;top:930.67px;font-size:25.2px;color:#5e5e5e;">64.8</div>
<div class="t f1" style="left:1147.00px;top:930.67px;font-size:25.2px;color:#5e5e5e;">319.4</div>
<div class="t f1" style="left:1326.00px;top:930.67px;font-size:25.2px;color:#5e5e5e;">2.37</div>
<div class="t f1" style="left:1525.00px;top:930.67px;font-size:25.2px;color:#5e5e5e;">2,321.42</div>
<div class="t f1" style="left:1778.00px;top:930.67px;font-size:25.2px;color:#5e5e5e;">4,266.6</div>
<div class="t f1" style="left:2062.00px;top:930.67px;font-size:25.2px;color:#5e5e5e;">0.11</div>
<div class="t f1" style="left:27.00px;top:987.03px;font-size:25.2px;color:#5e5e5e;word-spacing:-2.6px;letter-spacing:-0.2px;">Jun 27, 2024 11:47:00</div>
<svg class="b" style="left:376px;top:978.26px" width="30" height="30" viewBox="0 0 30 30"><circle cx="15" cy="15" r="14.5" fill="#f2c03c"/><path d="M15 9l-6.6 11.4h13.2z" fill="none" stroke="#fff" stroke-width="1.35" stroke-linejoin="round"/><path d="M15 13v3.8M15 17.8v1" stroke="#fff" stroke-width="1.2"/></svg>
<div class="t f1" style="left:484.00px;top:987.03px;font-size:25.2px;color:#5e5e5e;">13</div>
<div class="t f1" style="left:640.00px;top:987.03px;font-size:25.2px;color:#5e5e5e;">0</div>
<div class="t f1" style="left:788.00px;top:987.03px;font-size:25.2px;color:#5e5e5e;">738.23</div>
<div class="t f1" style="left:971.00px;top:987.03px;font-size:25.2px;color:#5e5e5e;">41.23</div>
<div class="t f1" style="left:1147.00px;top:987.03px;font-size:25.2px;color:#5e5e5e;">179.85</div>
<div class="t f1" style="left:1326.00px;top:987.03px;font-size:25.2px;color:#5e5e5e;">64.9</div>
<div class="t f1" style="left:1525.00px;top:987.03px;font-size:25.2px;color:#5e5e5e;">3,703.12</div>
<div class="t f1" style="left:1778.00px;top:987.03px;font-size:25.2px;color:#5e5e5e;">1,616.2</div>
<div class="t f1" style="left:2062.00px;top:987.03px;font-size:25.2px;color:#5e5e5e;">0.04</div>
<div class="t f1" style="left:27.00px;top:1043.39px;font-size:25.2px;color:#5e5e5e;word-spacing:-2.6px;letter-spacing:-0.2px;">Jun 27, 2024 11:46:00</div>
<svg class="b" style="left:376px;top:1034.62px" width="30" height="30" viewBox="0 0 30 30"><circle cx="15" cy="15" r="14.5" fill="#f2c03c"/><path d="M15 9l-6.6 11.4h13.2z" fill="none" stroke="#fff" stroke-width="1.35" stroke-linejoin="round"/><path d="M15 13v3.8M15 17.8v1" stroke="#fff" stroke-width="1.2"/></svg>
<div class="t f1" style="left:484.00px;top:1043.39px;font-size:25.2px;color:#5e5e5e;">10</div>
<div class="t f1" style="left:640.00px;top:1043.39px;font-size:25.2px;color:#5e5e5e;">0</div>
<div class="t f1" style="left:788.00px;top:1043.39px;font-size:25.2px;color:#5e5e5e;">4,898.1</div>
<div class="t f1" style="left:971.00px;top:1043.39px;font-size:25.2px;color:#5e5e5e;">312.8</div>
<div class="t f1" style="left:1147.00px;top:1043.39px;font-size:25.2px;color:#5e5e5e;">256</div>
<div class="t f1" style="left:1326.00px;top:1043.39px;font-size:25.2px;color:#5e5e5e;">3.1</div>
<div class="t f1" style="left:1525.00px;top:1043.39px;font-size:25.2px;color:#5e5e5e;">4,608.3</div>
<div class="t f1" style="left:1778.00px;top:1043.39px;font-size:25.2px;color:#5e5e5e;">6,781.4</div>
<div class="t f1" style="left:2062.00px;top:1043.39px;font-size:25.2px;color:#5e5e5e;">0.01</div>
<div class="t f1" style="left:27.00px;top:1099.75px;font-size:25.2px;color:#5e5e5e;word-spacing:-2.6px;letter-spacing:-0.2px;">Jun 27, 2024 11:45:00</div>
<svg class="b" style="left:376px;top:1090.98px" width="30" height="30" viewBox="0 0 30 30"><circle cx="15" cy="15" r="14.5" fill="#f2c03c"/><path d="M15 9l-6.6 11.4h13.2z" fill="none" stroke="#fff" stroke-width="1.35" stroke-linejoin="round"/><path d="M15 13v3.8M15 17.8v1" stroke="#fff" stroke-width="1.2"/></svg>
<div class="t f1" style="left:484.00px;top:1099.75px;font-size:25.2px;color:#5e5e5e;">5</div>
<div class="t f1" style="left:640.00px;top:1099.75px;font-size:25.2px;color:#5e5e5e;">0</div>
<div class="t f1" style="left:788.00px;top:1099.75px;font-size:25.2px;color:#5e5e5e;">10,042.8</div>
<div class="t f1" style="left:971.00px;top:1099.75px;font-size:25.2px;color:#5e5e5e;">369.8</div>
<div class="t f1" style="left:1147.00px;top:1099.75px;font-size:25.2px;color:#5e5e5e;">749.6</div>
<div class="t f1" style="left:1326.00px;top:1099.75px;font-size:25.2px;color:#5e5e5e;">3.4</div>
<div class="t f1" style="left:1525.00px;top:1099.75px;font-size:25.2px;color:#5e5e5e;">9,423.22</div>
<div class="t f1" style="left:1778.00px;top:1099.75px;font-size:25.2px;color:#5e5e5e;">13,305.77</div>
<div class="t f1" style="left:2062.00px;top:1099.75px;font-size:25.2px;color:#5e5e5e;">0.1</div>
<div class="t f1" style="left:27.00px;top:1156.11px;font-size:25.2px;color:#5e5e5e;word-spacing:-2.6px;letter-spacing:-0.2px;">Jun 27, 2024 11:44:00</div>
<svg class="b" style="left:376px;top:1147.34px" width="30" height="30" viewBox="0 0 30 30"><circle cx="15" cy="15" r="14.5" fill="#f2c03c"/><path d="M15 9l-6.6 11.4h13.2z" fill="none" stroke="#fff" stroke-width="1.35" stroke-linejoin="round"/><path d="M15 13v3.8M15 17.8v1" stroke="#fff" stroke-width="1.2"/></svg>
<div class="t f1" style="left:484.00px;top:1156.11px;font-size:25.2px;color:#5e5e5e;">22</div>
<div class="t f1" style="left:640.00px;top:1156.11px;font-size:25.2px;color:#5e5e5e;">0</div>
<div class="t f1" style="left:788.00px;top:1156.11px;font-size:25.2px;color:#5e5e5e;">3,914.36</div>
<div class="t f1" style="left:971.00px;top:1156.11px;font-size:25.2px;color:#5e5e5e;">1,388.41</div>
<div class="t f1" style="left:1147.00px;top:1156.11px;font-size:25.2px;color:#5e5e5e;">2,801.95</div>
<div class="t f1" style="left:1326.00px;top:1156.11px;font-size:25.2px;color:#5e5e5e;">2.96</div>
<div class="t f1" style="left:1525.00px;top:1156.11px;font-size:25.2px;color:#5e5e5e;">4,257.32</div>
<div class="t f1" style="left:1778.00px;top:1156.11px;font-size:25.2px;color:#5e5e5e;">6,693.47</div>
<div class="t f1" style="left:2062.00px;top:1156.11px;font-size:25.2px;color:#5e5e5e;">0.06</div>
<div class="t f1" style="left:27.00px;top:1212.47px;font-size:25.2px;color:#5e5e5e;word-spacing:-2.6px;letter-spacing:-0.2px;">Jun 27, 2024 11:43:00</div>
<svg class="b" style="left:376px;top:1203.70px" width="30" height="30" viewBox="0 0 30 30"><circle cx="15" cy="15" r="14.5" fill="#f2c03c"/><path d="M15 9l-6.6 11.4h13.2z" fill="none" stroke="#fff" stroke-width="1.35" stroke-linejoin="round"/><path d="M15 13v3.8M15 17.8v1" stroke="#fff" stroke-width="1.2"/></svg>
<div class="t f1" style="left:484.00px;top:1212.47px;font-size:25.2px;color:#5e5e5e;">17</div>
<div class="t f1" style="left:640.00px;top:1212.47px;font-size:25.2px;color:#5e5e5e;">0</div>
<div class="t f1" style="left:788.00px;top:1212.47px;font-size:25.2px;color:#5e5e5e;">2,305.18</div>
<div class="t f1" style="left:971.00px;top:1212.47px;font-size:25.2px;color:#5e5e5e;">232.59</div>
<div class="t f1" style="left:1147.00px;top:1212.47px;font-size:25.2px;color:#5e5e5e;">439.35</div>
<div class="t f1" style="left:1326.00px;top:1212.47px;font-size:25.2px;color:#5e5e5e;">2.85</div>
<div class="t f1" style="left:1525.00px;top:1212.47px;font-size:25.2px;color:#5e5e5e;">3,792.5</div>
<div class="t f1" style="left:1778.00px;top:1212.47px;font-size:25.2px;color:#5e5e5e;">4,922.47</div>
<div class="t f1" style="left:2062.00px;top:1212.47px;font-size:25.2px;color:#5e5e5e;">0.05</div>
<div class="t f1" style="left:27.00px;top:1268.83px;font-size:25.2px;color:#5e5e5e;word-spacing:-2.6px;letter-spacing:-0.2px;">Jun 27, 2024 11:42:00</div>
<svg class="b" style="left:376px;top:1260.06px" width="30" height="30" viewBox="0 0 30 30"><circle cx="15" cy="15" r="14.5" fill="#f2c03c"/><path d="M15 9l-6.6 11.4h13.2z" fill="none" stroke="#fff" stroke-width="1.35" stroke-linejoin="round"/><path d="M15 13v3.8M15 17.8v1" stroke="#fff" stroke-width="1.2"/></svg>
<div class="t f1" style="left:484.00px;top:1268.83px;font-size:25.2px;color:#5e5e5e;">22</div>
<div class="t f1" style="left:640.00px;top:1268.83px;font-size:25.2px;color:#5e5e5e;">0</div>
<div class="t f1" style="left:788.00px;top:1268.83px;font-size:25.2px;color:#5e5e5e;">2,537.78</div>
<div class="t f1" style="left:971.00px;top:1268.83px;font-size:25.2px;color:#5e5e5e;">88.04</div>
<div class="t f1" style="left:1147.00px;top:1268.83px;font-size:25.2px;color:#5e5e5e;">184.04</div>
<div class="t f1" style="left:1525.00px;top:1268.83px;font-size:25.2px;color:#5e5e5e;">4,746</div>
<div class="t f1" style="left:1778.00px;top:1268.83px;font-size:25.2px;color:#5e5e5e;">4,754</div>
</div>
<div class="b" style="left:1219.00px;top:1479.20px;width:1605.00px;height:6.80px;background:#6b7290;border-radius:3.4px"></div>
<div class="b" style="left:2825.00px;top:220.00px;width:7.00px;height:276.00px;background:#6b7290;border-radius:0 0 3px 3px"></div>
<div class="b" style="left:1351px;top:215px;width:392px;height:306px;background:#fff;border-radius:9px;box-shadow:0 7px 16px rgba(0,0,0,0.24), 0 1px 3px rgba(0,0,0,0.10)"></div>
<svg class="b" style="left:1527.00px;top:199.00px;" width="32" height="18" viewBox="0 0 32 18"><path d="M0 17L16 1L32 17" fill="#fff" stroke="#e2e2e2" stroke-width="1.2"/><rect x="0" y="16.5" width="32" height="2" fill="#fff"/></svg>
<svg class="b" style="left:1425.50px;top:239.50px;" width="30" height="30" viewBox="0 0 30 30"><circle cx="15" cy="15" r="14.5" fill="#3cc46e"/><path d="M15 6.5l-7.2 8h4.3v7.8h5.8v-7.8h4.3z" fill="#fff"/></svg>
<div class="t f1" style="left:1471.00px;top:242.84px;font-size:25px;color:#1b2733;">Up</div>
<svg class="b" style="left:1425.50px;top:293.50px;" width="30" height="30" viewBox="0 0 30 30"><circle cx="15" cy="15" r="14.5" fill="#e4483a"/><path d="M15 23.5l-7.2 -8h4.3v-7.8h5.8v7.8h4.3z" fill="#fff"/></svg>
<div class="t f1" style="left:1471.00px;top:296.84px;font-size:25px;color:#1b2733;">Down</div>
<svg class="b" style="left:1425.50px;top:347.50px;" width="30" height="30" viewBox="0 0 30 30"><circle cx="15" cy="15" r="14.5" fill="#f2c03c"/><path d="M15 9l-6.6 11.4h13.2z" fill="none" stroke="#fff" stroke-width="1.35" stroke-linejoin="round"/><path d="M15 13v3.8M15 17.8v1" stroke="#fff" stroke-width="1.2"/></svg>
<div class="t f1" style="left:1471.00px;top:350.84px;font-size:25px;color:#1b2733;">Trouble</div>
<svg class="b" style="left:1425.50px;top:401.50px;" width="30" height="30" viewBox="0 0 30 30"><circle cx="15" cy="15" r="14.5" fill="#e5632f"/><path d="M15 7v10" stroke="#fff" stroke-width="3.4" stroke-linecap="round"/><circle cx="15" cy="21.5" r="1.9" fill="#fff"/></svg>
<div class="t f1" style="left:1471.00px;top:404.84px;font-size:25px;color:#1b2733;">Critical</div>
<svg class="b" style="left:1386.00px;top:353.00px;" width="23" height="19" viewBox="0 0 23 19"><path d="M2 9.5l6.5 7L21 2" fill="none" stroke="#1b2733" stroke-width="3"/></svg>
<div class="b" style="left:1367.00px;top:470.50px;width:360.00px;height:1.20px;background:#e2e2e2"></div>
<div class="t f1" style="left:1656.50px;top:484.95px;font-size:20.5px;color:#4f86c2;">Reset</div>
<div class="b" style="left:108.00px;top:24.00px;width:342.00px;height:48.00px;background:#2e3d4c;border:1.5px solid #d6d9dc;border-radius:8px;box-sizing:border-box"></div>
<div class="t f1" style="left:116.00px;top:32.84px;font-size:25px;color:#e9e9e9;">Site24x7</div>
<div class="b" style="left:212.00px;top:34.00px;width:134.00px;height:22.00px;background:linear-gradient(90deg,#4a5563,#4d5866 30%,#5a626c 50%,#4d5866 75%,#455060 92%,#3a4656)"></div>
<svg class="b" style="left:421.00px;top:43.50px;" width="15" height="9" viewBox="0 0 15 9"><path d="M0 0h15l-7.5 9z" fill="#6f7377"/></svg>
<div class="t f1" style="left:108.00px;top:91.61px;font-size:17px;color:#f2f2f2;letter-spacing:0.1px">No Tags added</div>
<svg class="b" style="left:232.00px;top:86.00px;" width="19" height="19" viewBox="0 0 19 19"><path d="M9 2h8v8l-8 8l-8 -8z" fill="none" stroke="#c9c9c9" stroke-width="1.4" stroke-linejoin="round"/><circle cx="13.5" cy="5.5" r="1.4" fill="none" stroke="#c9c9c9" stroke-width="1.2"/></svg>
<div class="b" style="left:90.00px;top:1018.70px;width:378.00px;height:63.50px;background:#243240"></div>
<div class="b" style="left:102.00px;top:1024.00px;width:282.00px;height:64.00px;border:5.5px solid #1035e6;box-sizing:border-box"></div>
<div class="t f1" style="left:146.00px;top:156.66px;font-size:23.2px;color:#e6e8ea;">Summary</div>
<svg class="b" style="left:117.00px;top:157.00px;" width="16" height="19" viewBox="0 0 16 19"><path d="M1 1h9l5 5v12H1z" fill="#e4e4e4"/><path d="M10 1v5h5" fill="#9aa" /><path d="M3.5 9h8M3.5 12h8M3.5 15h6" stroke="#16222f" stroke-width="1.2"/></svg>
<div class="t f2" style="left:147.50px;top:219.26px;font-size:25px;color:#f0f0f0;transform:scaleX(0.88);transform-origin:0 0;">Geographic</div>
<svg class="b" style="left:435.00px;top:217.00px;" width="11" height="20" viewBox="0 0 11 20"><path d="M0 0l10.5 9.7L0 19.5z" fill="#8d9296"/></svg>
<svg class="b" style="left:118.00px;top:220.20px;" width="15" height="19" viewBox="0 0 15 19"><path d="M7.5 0.5C3.6 0.5 0.8 3.4 0.8 7.2c0 4.5 6.7 11.5 6.7 11.5s6.7-7 6.7-11.5C14.2 3.4 11.4 0.5 7.5 0.5z" fill="#e4e4e4"/><circle cx="7.5" cy="6.8" r="2.4" fill="#16222f"/></svg>
<div class="t f1" style="left:146.00px;top:283.06px;font-size:23.2px;color:#e6e8ea;">ISP</div>
<svg class="b" style="left:115.00px;top:283.40px;" width="20" height="20" viewBox="0 0 20 20"><circle cx="5" cy="3.5" r="3.2" fill="#e4e4e4"/><path d="M0.5 19v-8c0-2 1.5-3.5 3.5-3.5h2l3 4.5l6-2l1 2l-7 4v3z" fill="#e4e4e4"/><circle cx="16" cy="4.5" r="3" fill="#9aa3ad"/></svg>
<div class="t f1" style="left:146.00px;top:346.26px;font-size:23.2px;color:#e6e8ea;">Browser</div>
<svg class="b" style="left:114.00px;top:347.60px;" width="22" height="17" viewBox="0 0 22 17"><rect x="0.5" y="0.5" width="21" height="16" fill="#e4e4e4"/><path d="M0.5 3.5h21" stroke="#16222f" stroke-width="1"/><path d="M1 2h8" stroke="#888" stroke-width="1"/></svg>
<div class="t f1" style="left:146.00px;top:409.46px;font-size:23.2px;color:#e6e8ea;">Device Type</div>
<svg class="b" style="left:114.00px;top:409.80px;" width="22" height="19" viewBox="0 0 22 19"><rect x="1" y="1" width="20" height="12.5" fill="none" stroke="#e4e4e4" stroke-width="1.5"/><path d="M8.5 14h5l1.5 3h-8z" fill="#e4e4e4"/><rect x="5.5" y="16.5" width="11" height="2" fill="#e4e4e4"/></svg>
<div class="t f1" style="left:146.00px;top:472.66px;font-size:23.2px;color:#e6e8ea;">Web Pages</div>
<svg class="b" style="left:114.00px;top:473.00px;" width="22" height="20" viewBox="0 0 22 20"><path d="M16 16.5H1.5V1.5h19v11" fill="none" stroke="#e4e4e4" stroke-width="1.4"/><path d="M1.5 5h19" stroke="#e4e4e4" stroke-width="1.4"/><path d="M3.5 3.2h1.2M6 3.2h1.2M8.5 3.2h10" stroke="#e4e4e4" stroke-width="1.2"/><circle cx="16.5" cy="15.5" r="3.6" fill="none" stroke="#e4e4e4" stroke-width="1.4"/><path d="M15 14l3 3" stroke="#e4e4e4" stroke-width="1"/></svg>
<div class="t f1" style="left:146.00px;top:535.86px;font-size:23.2px;color:#e6e8ea;">Waterfall Analysis</div>
<svg class="b" style="left:116.00px;top:536.20px;" width="19" height="20" viewBox="0 0 19 20"><path d="M2.5 1h10l5 5v11.5q0 1.5-1.5 1.5h-13.5q-1.5 0-1.5-1.5v-15q0-1.5 1.5-1.5z" fill="none" stroke="#e4e4e4" stroke-width="1.5"/><path d="M8.4 5.8q-1.7 0-1.7 1.6v1.7q0 1.1-1.3 1.3q1.3 0.2 1.3 1.3v1.7q0 1.6 1.7 1.6M10.6 5.8q1.7 0 1.7 1.6v1.7q0 1.1 1.3 1.3q-1.3 0.2-1.3 1.3v1.7q0 1.6-1.7 1.6" fill="none" stroke="#e4e4e4" stroke-width="1.1"/></svg>
<div class="t f1" style="left:146.00px;top:599.06px;font-size:23.2px;color:#e6e8ea;">Web Vitals</div>
<svg class="b" style="left:114.50px;top:598.40px;" width="23" height="21" viewBox="0 0 23 21"><circle cx="10" cy="8.5" r="7.6" fill="none" stroke="#e4e4e4" stroke-width="1.4"/><path d="M2.5 8.5h15M10 1v15M4.2 4q5.8 2.3 11.6 0M4.2 13q5.8-2.3 11.6 0M10 1q-3.6 3.2-3.6 7.5t3.6 7.5M10 1q3.6 3.2 3.6 7.5t-3.6 7.5" fill="none" stroke="#e4e4e4" stroke-width="1"/><path d="M0.8 10.2Q2.5 19.5 12 19.2Q16.5 18.8 19 15.2L21.5 16.8L22 8.2L14.5 11.5L17 13Q15 16.2 11.5 16.4Q4.5 16.8 0.8 10.2z" fill="#e4e4e4" stroke="#16222f" stroke-width="0.7"/></svg>
<div class="t f1" style="left:141.00px;top:662.26px;font-size:23.2px;color:#e6e8ea;">User Sessions</div>
<svg class="b" style="left:115.00px;top:663.60px;" width="15" height="16" viewBox="0 0 15 16"><circle cx="7.5" cy="4.5" r="4" fill="#e4e4e4"/><path d="M0.5 15.5q0-6.5 7-6.5t7 6.5z" fill="#e4e4e4"/></svg>
<div class="t f1" style="left:146.00px;top:725.46px;font-size:23.2px;color:#e6e8ea;">Filterable Performance</div>
<svg class="b" style="left:116.00px;top:725.80px;" width="19" height="20" viewBox="0 0 19 20"><path d="M1 1.5h17l-6.5 8v9.5l-3.5-2v-7.5z" fill="none" stroke="#e4e4e4" stroke-width="1.4" stroke-linejoin="round"/></svg>
<div class="t f2" style="left:147.50px;top:786.26px;font-size:25px;color:#f0f0f0;transform:scaleX(0.88);transform-origin:0 0;">Events</div>
<svg class="b" style="left:435.00px;top:785.80px;" width="11" height="20" viewBox="0 0 11 20"><path d="M0 0l10.5 9.7L0 19.5z" fill="#8d9296"/></svg>
<svg class="b" style="left:114.00px;top:789.00px;" width="21" height="20" viewBox="0 0 21 20"><path d="M10.5 1l10 3.5l-10 3.5l-10-3.5z" fill="#e4e4e4"/><path d="M0.5 8.5l10 3.5l10-3.5M0.5 12.5l10 3.5l10-3.5M0.5 16l10 3.5l10-3.5" fill="none" stroke="#e4e4e4" stroke-width="2"/></svg>
<div class="t f1" style="left:146.00px;top:851.86px;font-size:23.2px;color:#e6e8ea;">Resources</div>
<svg class="b" style="left:114.00px;top:851.20px;" width="22" height="22" viewBox="0 0 22 22"><path d="M1 0v21h21" fill="none" stroke="#e4e4e4" stroke-width="1"/><path d="M3 18l4-7l4 4l5-8l4 5" fill="none" stroke="#e4e4e4" stroke-width="1.3"/><circle cx="13" cy="12" r="5" fill="none" stroke="#e4e4e4" stroke-width="1.2"/></svg>
<div class="t f1" style="left:146.00px;top:915.06px;font-size:23.2px;color:#e6e8ea;">Ajax calls</div>
<svg class="b" style="left:115.00px;top:915.90px;" width="20" height="18" viewBox="0 0 20 18"><path d="M2 8q0-5 6-5h9l-3-2.5M18 10q0 5-6 5H3l3 2.5" fill="none" stroke="#e4e4e4" stroke-width="1.8" stroke-linecap="round" stroke-linejoin="round"/></svg>
<div class="t f2" style="left:147.50px;top:975.86px;font-size:25px;color:#f0f0f0;transform:scaleX(0.88);transform-origin:0 0;">JavaScript&nbsp; Errors</div>
<svg class="b" style="left:435.00px;top:975.40px;" width="11" height="20" viewBox="0 0 11 20"><path d="M0 0l10.5 9.7L0 19.5z" fill="#8d9296"/></svg>
<svg class="b" style="left:115.00px;top:978.60px;" width="20" height="18" viewBox="0 0 20 18"><path d="M10 1.5l9 15.5H1z" fill="none" stroke="#e4e4e4" stroke-width="2" stroke-linejoin="round"/><path d="M10 6.5v5.5M10 13.5v1.8" stroke="#e4e4e4" stroke-width="2"/></svg>
<div class="t f1" style="left:153.00px;top:1040.66px;font-size:23.2px;color:#ffffff;">Data Collection Stats</div>
<svg class="b" style="left:115.80px;top:1040.00px;" width="26" height="20" viewBox="0 0 26 20"><rect x="0" y="0" width="26" height="20" fill="#adadad"/><rect x="1.3" y="5.00" width="4.6" height="2.7" fill="#243240"/><rect x="13.0" y="5.00" width="4.9" height="2.7" fill="#243240"/><rect x="18.8" y="5.00" width="5.6" height="2.7" fill="#243240"/><rect x="1.3" y="8.90" width="4.6" height="2.7" fill="#243240"/><rect x="13.0" y="8.90" width="4.9" height="2.7" fill="#243240"/><rect x="18.8" y="8.90" width="5.6" height="2.7" fill="#243240"/><rect x="1.3" y="12.90" width="4.6" height="2.7" fill="#243240"/><rect x="13.0" y="12.90" width="4.9" height="2.7" fill="#243240"/><rect x="18.8" y="12.90" width="5.6" height="2.7" fill="#243240"/><rect x="1.3" y="16.70" width="4.6" height="2.7" fill="#243240"/><rect x="13.0" y="16.70" width="4.9" height="2.7" fill="#243240"/><rect x="18.8" y="16.70" width="5.6" height="2.7" fill="#243240"/></svg>
<div class="t f1" style="left:0;width:90px;text-align:center;top:62.39px;font-size:17.5px;color:#f2f2f2">Home</div>
<div class="t f1" style="left:0;width:90px;text-align:center;top:149.39px;font-size:17.5px;color:#f2f2f2">Alarms</div>
<div class="t f1" style="left:0;width:90px;text-align:center;top:236.69px;font-size:17.5px;color:#f2f2f2">Web</div>
<div class="t f1" style="left:0;width:90px;text-align:center;top:324.89px;font-size:17.5px;color:#f2f2f2">APM</div>
<div class="t f1" style="left:0;width:90px;text-align:center;top:412.09px;font-size:17.5px;color:#f2f2f2">Server</div>
<div class="t f1" style="left:0;width:90px;text-align:center;top:498.69px;font-size:17.5px;color:#f2f2f2">Plugins</div>
<div class="t f1" style="left:0;width:90px;text-align:center;top:580.69px;font-size:17.5px;color:#f2f2f2">Database</div>
<div class="t f1" style="left:0;width:90px;text-align:center;top:673.39px;font-size:17.5px;color:#f2f2f2">K8s</div>
<div class="t f1" style="left:0;width:90px;text-align:center;top:761.09px;font-size:17.5px;color:#f2f2f2">VMware</div>
<div class="t f1" style="left:0;width:90px;text-align:center;top:848.69px;font-size:17.5px;color:#f2f2f2">Cloud</div>
<div class="t f1" style="left:0;width:90px;text-align:center;top:936.39px;font-size:17.5px;color:#f2f2f2">Network</div>
<div class="t f1" style="left:0;width:90px;text-align:center;top:1029.99px;font-size:17.5px;color:#f2f2f2">AWS</div>
<div class="t f1" style="left:0;width:90px;text-align:center;top:1117.19px;font-size:17.5px;color:#8cbd3f">RUM</div>
<div class="t f1" style="left:0;width:90px;text-align:center;top:1198.29px;font-size:17.5px;color:#f2f2f2">Metrics</div>
<div class="t f1" style="left:0;width:90px;text-align:center;top:1285.39px;font-size:17.5px;color:#f2f2f2">AppLogs</div>
<svg class="b" style="left:31.00px;top:24.00px;" width="29" height="28" viewBox="0 0 29 28"><path d="M14.5 0.5L0.5 13.5h4v14h7v-8h6v8h7v-14h4z" fill="#f0f0f0"/></svg>
<svg class="b" style="left:33.00px;top:113.00px;" width="24" height="26" viewBox="0 0 24 26"><path d="M12 0.5c1.2 0 2 0.8 2 1.8c4 1 6 4.5 6 8.5v6l3.5 4.5H0.5L4 16.8v-6c0-4 2-7.5 6-8.5c0-1 0.8-1.8 2-1.8z" fill="#f0f0f0"/><circle cx="12" cy="23" r="2.6" fill="#f0f0f0"/></svg>
<svg class="b" style="left:31.00px;top:200.00px;" width="28" height="28" viewBox="0 0 28 28"><circle cx="14" cy="14" r="13.5" fill="#f0f0f0"/><path d="M6 6q3-2 6 0l1 3l-3 3l2 3l-1 3l-3-1l-1-4l-3-2zM15 3l4 1l2 3l-3 1zM16 14l5 1l2 3l-3 6l-2 1l-1-5z" fill="#0a1721"/></svg>
<svg class="b" style="left:27.00px;top:293.00px;" width="36" height="21" viewBox="0 0 36 21"><circle cx="8" cy="13" r="7.3" fill="none" stroke="#f0f0f0" stroke-width="2.6"/><circle cx="28" cy="13" r="7.3" fill="none" stroke="#f0f0f0" stroke-width="2.6"/><path d="M4 13a4 4 0 0 0 6 3.5" fill="none" stroke="#f0f0f0" stroke-width="1.8"/><path d="M24 13a4 4 0 0 0 6 3.5" fill="none" stroke="#f0f0f0" stroke-width="1.8"/><path d="M5 6l3-5h5l2 4h6l2-4h5l3 5l-4 2h-18z" fill="#f0f0f0"/><circle cx="18" cy="8" r="2" fill="#0a1721"/></svg>
<svg class="b" style="left:31.00px;top:375.00px;" width="28" height="30" viewBox="0 0 28 30"><rect x="0.5" y="1.0" width="27" height="8.3" rx="4.1" fill="#f0f0f0"/><path d="M5 5.15h6" stroke="#0a1721" stroke-width="1.2"/><circle cx="18.5" cy="5.15" r="1.6" fill="#0a1721"/><circle cx="22.5" cy="5.15" r="1.6" fill="#0a1721"/><rect x="0.5" y="10.8" width="27" height="8.3" rx="4.1" fill="#f0f0f0"/><path d="M5 14.950000000000001h6" stroke="#0a1721" stroke-width="1.2"/><circle cx="18.5" cy="14.950000000000001" r="1.6" fill="#0a1721"/><circle cx="22.5" cy="14.950000000000001" r="1.6" fill="#0a1721"/><rect x="0.5" y="20.6" width="27" height="8.3" rx="4.1" fill="#f0f0f0"/><path d="M5 24.75h6" stroke="#0a1721" stroke-width="1.2"/><circle cx="18.5" cy="24.75" r="1.6" fill="#0a1721"/><circle cx="22.5" cy="24.75" r="1.6" fill="#0a1721"/></svg>
<svg class="b" style="left:34.00px;top:455.00px;" width="23" height="38" viewBox="0 0 23 38"><rect x="5" y="0" width="2.5" height="8" fill="#f0f0f0"/><rect x="15.5" y="0" width="2.5" height="8" fill="#f0f0f0"/><rect x="0.5" y="7" width="22" height="3" fill="#f0f0f0"/><path d="M2 10h19v8q0 6-6 7.5h-7q-6-1.5-6-7.5z" fill="#f0f0f0"/><path d="M11.5 25v5q0 3-4 3t-4 3" fill="none" stroke="#f0f0f0" stroke-width="1.6"/></svg>
<svg class="b" style="left:32.00px;top:546.00px;" width="26" height="33" viewBox="0 0 26 33"><ellipse cx="13" cy="4" rx="12" ry="3.5" fill="#f0f0f0"/><path d="M1 7.0q12 4.5 24 0v6.5q-12 4.5-24 0z" fill="#f0f0f0"/><circle cx="20" cy="10.5" r="0.9" fill="#0a1721"/><circle cx="23" cy="10.0" r="0.9" fill="#0a1721"/><path d="M1 15.5q12 4.5 24 0v6.5q-12 4.5-24 0z" fill="#f0f0f0"/><circle cx="20" cy="19.0" r="0.9" fill="#0a1721"/><circle cx="23" cy="18.5" r="0.9" fill="#0a1721"/><path d="M1 24.0q12 4.5 24 0v6.5q-12 4.5-24 0z" fill="#f0f0f0"/><circle cx="20" cy="27.5" r="0.9" fill="#0a1721"/><circle cx="23" cy="27.0" r="0.9" fill="#0a1721"/></svg>
<svg class="b" style="left:28.00px;top:632.00px;" width="34" height="33" viewBox="0 0 34 33"><path d="M17 0.5l14 6.7l3.5 15l-9.7 12H9.2L-0.5 22.2L3 7.2z" fill="#f0f0f0" transform="scale(0.97) translate(0.5,0)"/><circle cx="17" cy="17" r="8" fill="none" stroke="#0a1721" stroke-width="1.8"/><path d="M17 6v22M6 17h22M9.5 9.5l15 15M24.5 9.5l-15 15" stroke="#0a1721" stroke-width="1.3"/><circle cx="17" cy="17" r="2.2" fill="#0a1721"/></svg>
<svg class="b" style="left:32.00px;top:722.00px;" width="27" height="27" viewBox="0 0 27 27"><rect x="8" y="1" width="18" height="17" fill="none" stroke="#f0f0f0" stroke-width="2.4"/><rect x="1.2" y="8.5" width="17.5" height="17.5" fill="none" stroke="#f0f0f0" stroke-width="2.4"/></svg>
<svg class="b" style="left:28.00px;top:815.00px;" width="35" height="23" viewBox="0 0 35 23"><path d="M8 22.5C3.5 22.5 0.5 19.5 0.5 15.5c0-3.5 2.5-6.5 6-7C7.5 4 11.5 0.5 17 0.5c5 0 9 3.5 10 8c4 0.3 7.5 3 7.5 7c0 4-3 7-7.5 7z" fill="#f0f0f0"/></svg>
<svg class="b" style="left:30.50px;top:899.50px;" width="30" height="29" viewBox="0 0 35 32"><rect x="9" y="0" width="17" height="7" rx="1" fill="#f0f0f0"/><rect x="9" y="8.5" width="17" height="4" fill="#f0f0f0"/><path d="M17.5 12.5v3M6 15.5h23M6 15.5v3M29 15.5v3" stroke="#f0f0f0" stroke-width="1.6"/><rect x="0" y="18" width="13" height="10" rx="1" fill="#f0f0f0"/><rect x="22" y="18" width="13" height="10" rx="1" fill="#f0f0f0"/><path d="M6.5 28v3M28.5 28v3M3 31h7M25 31h7" stroke="#f0f0f0" stroke-width="1.6"/></svg>
<svg class="b" style="left:29.00px;top:990.00px;" width="32" height="31" viewBox="0 0 32 31"><path d="M1 4l7-3l7 3v8l-7 3l-7-3z" fill="#f0f0f0"/><path d="M1 4l7 3l7-3M8 7v8" fill="none" stroke="#0a1721" stroke-width="1.1"/><path d="M16 4l7-3l7 3v8l-7 3l-7-3z" fill="#f0f0f0"/><path d="M16 4l7 3l7-3M23 7v8" fill="none" stroke="#0a1721" stroke-width="1.1"/><path d="M8.5 18l7-3l7 3v8l-7 3l-7-3z" fill="#f0f0f0"/><path d="M8.5 18l7 3l7-3M15.5 21v8" fill="none" stroke="#0a1721" stroke-width="1.1"/></svg>
<svg class="b" style="left:30.00px;top:1078.00px;" width="30" height="30" viewBox="0 0 30 30"><circle cx="14" cy="14" r="13.5" fill="#86b83e"/><path d="M1 14h26M14 1v26M4 6q10 4 20 0M4 22q10-4 20 0M14 1q-7 6-7 13t7 13M14 1q7 6 7 13t-7 13" fill="none" stroke="#0a1721" stroke-width="1.2"/><circle cx="21" cy="21" r="5.5" fill="#0a1721" stroke="#b9c6b0" stroke-width="1.6"/><path d="M25 25l4 4" stroke="#b9c6b0" stroke-width="2"/></svg>
<svg class="b" style="left:29.00px;top:1159.00px;" width="31" height="29" viewBox="0 0 31 29"><path d="M15.5 0.5l15 5l-15 5l-15-5z" fill="#f0f0f0"/><path d="M0.5 9.0l15 5l15-5v2.5l-15 5l-15-5z" fill="#f0f0f0"/><path d="M0.5 15.5l15 5l15-5v2.5l-15 5l-15-5z" fill="#f0f0f0"/><path d="M0.5 22.0l15 5l15-5v2.5l-15 5l-15-5z" fill="#f0f0f0"/></svg>
<svg class="b" style="left:34.00px;top:1249.00px;" width="22" height="29" viewBox="0 0 22 29"><rect x="0.5" y="0.5" width="21" height="28" rx="2" fill="#f0f0f0"/><path d="M4 8l4-4l3 3l5-4" fill="none" stroke="#0a1721" stroke-width="1.4"/><path d="M3.5 17h5M3.5 20h5M3.5 23h5" stroke="#0a1721" stroke-width="1.2"/><circle cx="14" cy="20" r="4.5" fill="none" stroke="#0a1721" stroke-width="1.8"/><path d="M17 23.5l4 4" stroke="#0a1721" stroke-width="2"/></svg>
<svg class="b" style="left:31.00px;top:1334.00px;" width="28" height="29" viewBox="0 0 28 29"><rect x="0.5" y="2" width="27" height="18" rx="1.5" fill="#f0f0f0"/><path d="M14 0v3M14 20v3M14 21l-7 7M14 21l7 7" stroke="#f0f0f0" stroke-width="1.8"/><rect x="6" y="10" width="3.5" height="7" fill="#0a1721"/><rect x="11" y="12" width="3.5" height="5" fill="#0a1721"/><rect x="16" y="5" width="3.5" height="12" fill="#0a1721"/></svg>
<div class="t f1" style="left:0;width:86px;text-align:center;top:1434.68px;font-size:15.5px;color:#d0d0d0">16:05</div>
<div class="t f1" style="left:0;width:86px;text-align:center;top:1457.90px;font-size:15px;color:#d0d0d0">27 Jun, 24</div>
</body></html>
